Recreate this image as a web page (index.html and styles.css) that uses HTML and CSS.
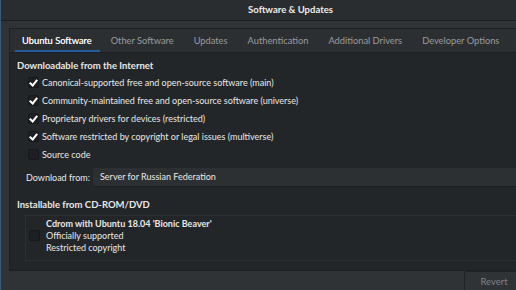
FILE: index.html
```html
<!DOCTYPE html>
<html lang="en">
<head>
  <meta charset="UTF-8">
  <title>Software &amp; Updates</title>
  <link rel="stylesheet" href="styles.css">
</head>
<body>
  <div class="window">
    <div class="titlebar">Software &amp; Updates</div>

    <div class="content">
      <div class="notebook">
        <div class="tabs">
          <div class="tab active">Ubuntu Software</div>
          <div class="tab">Other Software</div>
          <div class="tab">Updates</div>
          <div class="tab">Authentication</div>
          <div class="tab">Additional Drivers</div>
          <div class="tab">Developer Options</div>
        </div>

        <div class="page">
          <div class="heading">Downloadable from the Internet</div>
          <div class="checks">
            <label class="check"><span class="box on"></span>Canonical-supported free and open-source software (main)</label>
            <label class="check"><span class="box on"></span>Community-maintained free and open-source software (universe)</label>
            <label class="check"><span class="box on"></span>Proprietary drivers for devices (restricted)</label>
            <label class="check"><span class="box on"></span>Software restricted by copyright or legal issues (multiverse)</label>
            <label class="check"><span class="box"></span>Source code</label>
          </div>

          <div class="download">
            <span class="label">Download from:</span>
            <div class="combo">Server for Russian Federation</div>
          </div>

          <div class="heading second">Installable from CD-ROM/DVD</div>
          <div class="listbox">
            <span class="box"></span>
            <div class="cdrom">
              <div class="cd-title">Cdrom with Ubuntu 18.04 'Bionic Beaver'</div>
              <div>Officially supported</div>
              <div>Restricted copyright</div>
            </div>
          </div>
        </div>
      </div>
    </div>

    <div class="footer">
      <button class="revert">Revert</button>
    </div>
  </div>
</body>
</html>
```

FILE: styles.css
```css
html, body {
  margin: 0;
  height: 100%;
  overflow: hidden;
  background: #2f3336;
}

body {
  font-family: "Lato", "Liberation Sans", sans-serif;
  font-size: 9px;
  color: #e8e8e6;
}

.window {
  width: 580px;
  height: 290px;
  display: flex;
  flex-direction: column;
  background: #2f3336;
  border-left: 1px solid #3a5878;
  box-sizing: border-box;
}

.titlebar {
  height: 20px;
  line-height: 20px;
  text-align: center;
  font-size: 9.5px;
  font-weight: bold;
  background: #2a2d30;
  border-bottom: 1px solid #1c1e20;
  color: #eeeeec;
}

.content {
  padding: 7px 0 0 8px;
}

.notebook {
  border: 1px solid #1e2022;
  border-right: none;
}

.tabs {
  display: flex;
  height: 23px;
  padding-left: 2px;
  background: #2c2f32;
  border-bottom: 1px solid #1e2022;
  font-size: 9.3px;
}

.tab {
  position: relative;
  padding: 0 10px;
  line-height: 23px;
  color: #999c9e;
}

.tab.active {
  color: #f2f2f0;
  padding: 0 9px 0 10px;
  text-shadow: 0 0 0.4px #ffffff;
}

.tab.active::after {
  content: "";
  position: absolute;
  left: 3px;
  right: 1px;
  bottom: 0;
  height: 2px;
  background: #215d9c;
}

.page {
  height: 217px;
  background: #232629;
  padding: 6px 0 0 7px;
  box-sizing: border-box;
}

.heading {
  font-size: 9.5px;
  font-weight: bold;
  height: 14px;
  line-height: 14px;
}

.checks {
  display: flex;
  flex-direction: column;
  padding-left: 11px;
}

.check {
  display: flex;
  align-items: center;
  height: 18px;
}

.box {
  flex: none;
  width: 9px;
  height: 9px;
  margin-right: 3px;
  background: #1d1f22;
  border: 1px solid #17181a;
  border-radius: 2px;
  position: relative;
}

.box.on::after {
  content: "";
  position: absolute;
  left: 2px;
  top: 0px;
  width: 3px;
  height: 6px;
  border: solid #ffffff;
  border-width: 0 2px 2px 0;
  transform: rotate(40deg);
}

.download {
  display: flex;
  align-items: center;
  margin: 4px 0 0 9px;
  height: 20px;
}

.label {
  flex: none;
  width: 67px;
  white-space: nowrap;
}

.combo {
  flex: 1;
  height: 19px;
  line-height: 18px;
  padding-left: 7px;
  background: #2d3033;
  border-bottom: 1px solid #1c1e20;
  box-sizing: border-box;
  border-radius: 2px 0 0 2px;
}

.heading.second {
  margin-top: 11px;
}

.listbox {
  display: flex;
  align-items: flex-start;
  margin: 3px 0 0 8px;
  height: 46px;
  border: 1px solid #2c2f32;
  border-right: none;
  padding: 2px 0 0 3px;
  box-sizing: border-box;
}

.listbox .box {
  margin: 12px 6px 0 0;
}

.cdrom {
  line-height: 12px;
}

.cd-title {
  font-weight: bold;
}

.footer {
  flex: 1;
  display: flex;
  justify-content: flex-end;
  align-items: flex-end;
}

.revert {
  margin-right: 56px;
  width: 60px;
  height: 19px;
  font-family: inherit;
  font-size: 9.5px;
  color: #7f8386;
  background: #2f3336;
  border: 1px solid #202224;
  border-bottom: none;
  border-radius: 3px 3px 0 0;
  padding: 0 0 0 0;
}
```
